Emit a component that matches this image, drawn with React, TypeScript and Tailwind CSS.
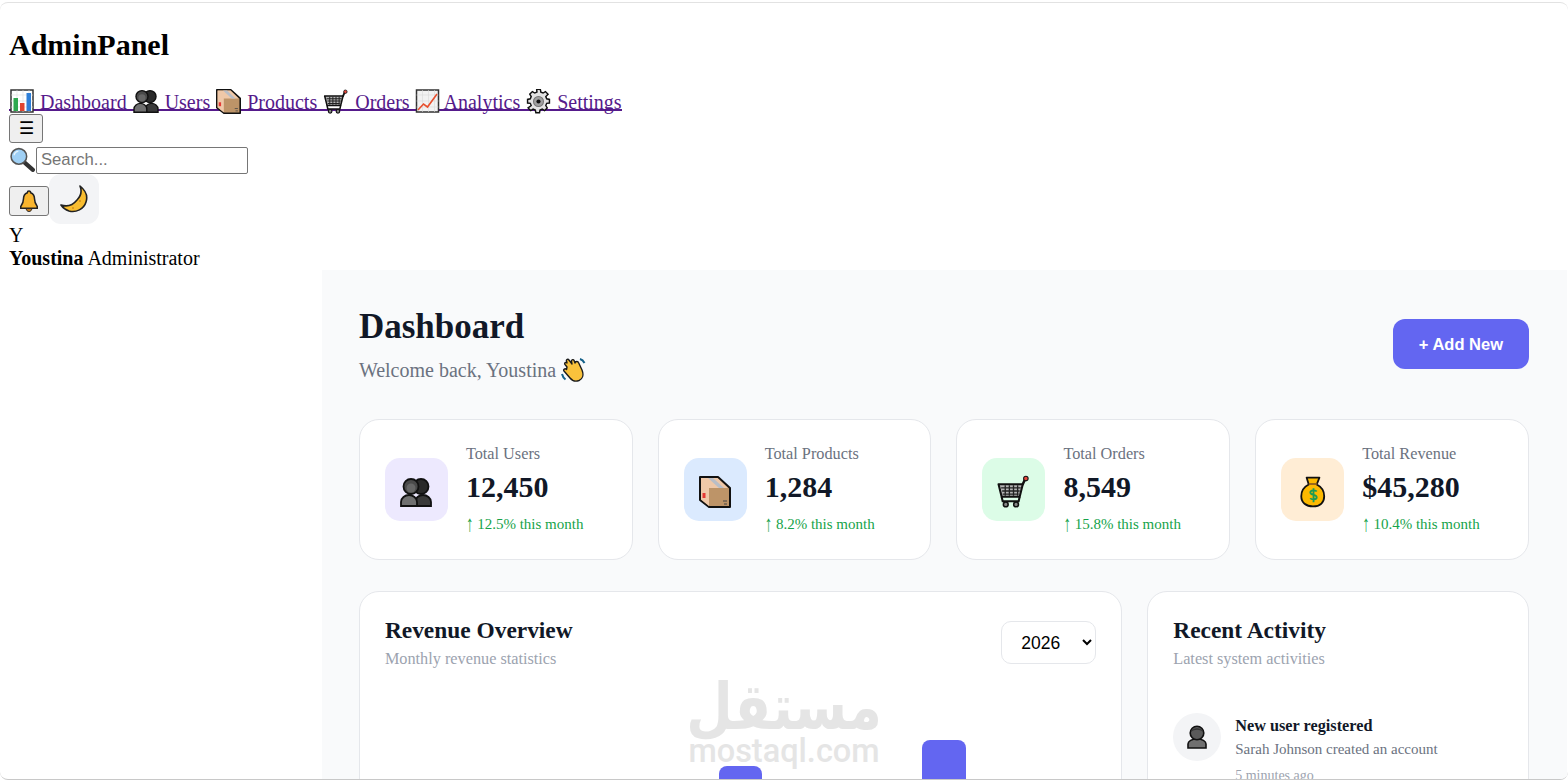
type IconProps = { w?: number; h?: number };

function BarChartEmoji({ w = 26, h = 24 }: IconProps) {
  return (
    <svg width={w} height={h} viewBox="0 0 24 24" className="inline-block align-[-4px]">
      <rect x="1" y="1" width="22" height="22" fill="#fff" stroke="#333" strokeWidth="1.500" />
      <path d="M1 6h22M1 12h22M1 18h22M7 1v22M13 1v22M19 1v22" stroke="#dcdcdc" strokeWidth="0.600" />
      <rect x="3.500" y="9" width="4.500" height="13" fill="#2ea84f" />
      <rect x="10" y="14" width="4.500" height="8" fill="#e0432f" />
      <rect x="16.500" y="4" width="4.500" height="18" fill="#2f7fd8" />
    </svg>
  );
}

function PeopleEmoji({ w = 28, h = 24 }: IconProps) {
  return (
    <svg width={w} height={h} viewBox="0 0 32 30" className="inline-block align-[-4px]">
      <path d="M15 29v-4c0-4 4-7 8-7s8 3 8 7v4z" fill="#3a3a3a" stroke="#111" strokeWidth="1.800" />
      <circle cx="21" cy="9.500" r="7.500" fill="#2a2a2a" stroke="#111" strokeWidth="1.800" />
      <path d="M1 29v-4c0-4 4-7 8-7s8 3 8 7v4z" fill="#707070" stroke="#111" strokeWidth="1.800" />
      <circle cx="11" cy="9.500" r="7.500" fill="#4a4a4a" stroke="#111" strokeWidth="1.800" />
      <ellipse cx="11" cy="11" rx="4.500" ry="4.500" fill="#666" />
    </svg>
  );
}

function PersonEmoji() {
  return (
    <svg width="24" height="24" viewBox="0 0 24 24">
      <path d="M3 23v-4c0-3 4-5 9-5s9 2 9 5v4z" fill="#707070" stroke="#111" strokeWidth="1.600" />
      <circle cx="12" cy="8" r="6.800" fill="#5a5a5a" stroke="#111" strokeWidth="1.600" />
      <path d="M6 7c3-3 9-3 12 0-1-5-11-5-12 0z" fill="#333" />
    </svg>
  );
}

function BoxEmoji({ w = 27, h = 25 }: IconProps) {
  return (
    <svg width={w} height={h} viewBox="0 0 32 32" className="inline-block align-[-5px]">
      <path d="M1 1h18l12 11v19H10l-9-7z" fill="#bd9468" stroke="#111" strokeWidth="2" strokeLinejoin="round" />
      <path d="M2 2h16.500L29 12H10v18l-8-6.500z" fill="#efc8a8" />
      <path d="M9 2h5l11 10h-5z" fill="#b9bec6" />
      <rect x="3.500" y="17" width="3" height="5" fill="#e53935" />
      <path d="M24 25h4M25 28h3" stroke="#444" strokeWidth="1" />
    </svg>
  );
}

function CartEmoji({ w = 28, h = 25 }: IconProps) {
  return (
    <svg width={w} height={h} viewBox="0 0 32 32" className="inline-block align-[-5px]">
      <path d="M1.500 9H25l-3 12H4.500z" fill="#b5b5b5" stroke="#111" strokeWidth="2" strokeLinejoin="round" />
      <path d="M4 12.500h19M5 15.500h17M5.500 18.500h15.500M8 10v10M12 10v10M16 10v10M20 10v10" stroke="#222" strokeWidth="1.300" />
      <path d="M25 9l2.500-5.500" stroke="#111" strokeWidth="2.400" strokeLinecap="round" />
      <circle cx="28" cy="3.500" r="2.200" fill="#e5483c" stroke="#111" strokeWidth="1" />
      <path d="M4.500 21l1 4.500h15.500l1-4.500" fill="none" stroke="#111" strokeWidth="2" />
      <circle cx="8.500" cy="28.500" r="2.300" fill="#888" stroke="#111" strokeWidth="1.500" />
      <circle cx="18.500" cy="28.500" r="2.300" fill="#888" stroke="#111" strokeWidth="1.500" />
    </svg>
  );
}

function TrendEmoji({ w = 25, h = 24 }: IconProps) {
  return (
    <svg width={w} height={h} viewBox="0 0 24 24" className="inline-block align-[-4px]">
      <rect x="1" y="1" width="22" height="22" fill="#f2f2f2" stroke="#333" strokeWidth="1.500" />
      <path d="M1 6h22M1 12h22M1 18h22M7 1v22M13 1v22M19 1v22" stroke="#d8d8d8" strokeWidth="0.600" />
      <path d="M2.500 21 8 15l4 3 9.500-13" fill="none" stroke="#e8502f" strokeWidth="1.600" />
    </svg>
  );
}

function GearEmoji({ w = 27, h = 25 }: IconProps) {
  return (
    <svg width={w} height={h} viewBox="0 0 24 24" className="inline-block align-[-5px]">
      <path
        d="M10 1h4l.6 3 2.400 1 2.600-1.600 2.900 2.900L20 8.900l1 2.400 3 .7v4l-3 .3-1 2.400 1.600 2.600-2.900 2.900-2.600-1.600-2.400 1-.6 3h-4l-.6-3-2.400-1-2.600 1.600-2.900-2.900L4 18.700 3 16.300 0 16v-4l3-.7 1-2.400-1.600-2.600 2.900-2.900L7.900 5l2.400-1z"
        transform="translate(1.500 -.5) scale(.875)"
        fill="#e4e4e4"
        stroke="#111"
        strokeWidth="1.600"
      />
      <circle cx="12" cy="12" r="4.800" fill="#a0a0a0" stroke="#777" />
      <circle cx="12" cy="12" r="2" fill="#111" />
    </svg>
  );
}

function SearchEmoji() {
  return (
    <svg width="27" height="25" viewBox="0 0 26 24" className="mb-[2px] inline-block">
      <path d="M14 14 23 22" stroke="#333" strokeWidth="4" strokeLinecap="round" />
      <circle cx="9.500" cy="9" r="7.500" fill="#9fd0f5" stroke="#555" strokeWidth="1.500" />
      <path d="M5 8c0-2 2-4 4-4" stroke="#e4f3fd" strokeWidth="1.500" fill="none" />
    </svg>
  );
}

function BellEmoji() {
  return (
    <svg width="20" height="22" viewBox="0 0 18 20" className="inline-block">
      <path d="M9 1c-1 0-1.500.7-1.500 1.500C5 3.500 4 5.500 4 8c0 3-1 5-2.500 7v1.500h15V15C15 13 14 11 14 8c0-2.500-1-4.500-3.500-5.500C10.500 1.700 10 1 9 1z" fill="#f9b52e" stroke="#222" strokeWidth="1.400" />
      <path d="M6.500 17c0 1.500 1 2.500 2.500 2.500s2.500-1 2.500-2.500z" fill="#e08b1a" stroke="#222" strokeWidth="0.900" />
    </svg>
  );
}

function MoonEmoji() {
  return (
    <svg width="30" height="30" viewBox="0 0 30 30">
      <path d="M21 2c5 4 8 10 6 16-2 7-10 11-17 9-3-1-6-3-8-6 6 2 12 0 16-5 4-4 5-9 3-14z" fill="#f9bd2f" stroke="#222" strokeWidth="1.600" strokeLinejoin="round" />
      <circle cx="21" cy="17" r="1.100" fill="#d8931c" />
      <circle cx="14" cy="24" r="1.100" fill="#d8931c" />
    </svg>
  );
}

function WaveEmoji() {
  return (
    <svg width="25" height="24" viewBox="0 0 25 24" className="inline-block align-[-5px]">
      <path d="M6 9 4 6.500c-1-1.500 1-3 2-1.500L5.500 3c-.5-1.500 1.500-2.500 2.500-1l3 4-.5-3c0-1.500 2-2 2.600-.5L14 5c.5-2 3-2 3.500-.5L21 12c2 5 .5 9-3 10.500-4 1.500-7 0-9-2.500L3 13c-1-1.500 1-3 2.500-1.500z" fill="#f9c23c" stroke="#1b1b1b" strokeWidth="1.400" strokeLinejoin="round" />
      <path d="M1 16c.5 2 1.500 4 3.500 5.500M19 1c2 .5 3.500 2 4.500 4" fill="none" stroke="#14618a" strokeWidth="2" />
    </svg>
  );
}

function MoneyEmoji() {
  return (
    <svg width="26" height="32" viewBox="0 0 24 30">
      <path d="M6 1.500h12l-2.500 6.500c4 2 7 6 7 11 0 6-4 9.500-10.500 9.500S1 25 1 19c0-5 3-9 7-11z" fill="#fdb900" stroke="#111" strokeWidth="1.700" strokeLinejoin="round" />
      <path d="M8 7.500h8" stroke="#8a5a20" strokeWidth="1.600" />
      <path d="M15.500 14.500c-1-1.500-6-1.500-6 1 0 3 6 1.500 6 4.500 0 2.500-5 2.500-6 .7M12.500 11.500v13" fill="none" stroke="#1d9a55" strokeWidth="1.700" />
    </svg>
  );
}

const navItems = [
  { icon: <BarChartEmoji />, label: "Dashboard" },
  { icon: <PeopleEmoji />, label: "Users" },
  { icon: <BoxEmoji />, label: "Products" },
  { icon: <CartEmoji />, label: "Orders" },
  { icon: <TrendEmoji />, label: "Analytics" },
  { icon: <GearEmoji />, label: "Settings" },
];

const stats = [
  { icon: <PeopleEmoji w={32} h={30} />, tint: "bg-[#ede9fe]", label: "Total Users", value: "12,450", trend: "12.5%" },
  { icon: <BoxEmoji w={32} h={32} />, tint: "bg-[#dbeafe]", label: "Total Products", value: "1,284", trend: "8.2%" },
  { icon: <CartEmoji w={33} h={33} />, tint: "bg-[#dcfce7]", label: "Total Orders", value: "8,549", trend: "15.8%" },
  { icon: <MoneyEmoji />, tint: "bg-[#ffedd5]", label: "Total Revenue", value: "$45,280", trend: "10.4%" },
];

export default function App() {
  return (
    <div className="relative h-[783px] overflow-hidden bg-white pt-[2px] font-['Liberation_Serif',serif] text-[20px] text-black">
      <div className="h-[778px] overflow-hidden rounded-lg border-t border-b border-t-[#e2e2e2] border-b-[#c8c8c8] bg-white">
        <aside className="pl-[9px]">
          <h1 className="mt-[25px] mb-[27px] text-[30px] leading-[34px] font-bold">AdminPanel</h1>
          <nav className="h-[23px] leading-[23px] whitespace-nowrap">
            <span className="bg-[linear-gradient(#551a8b,#551a8b)] bg-[length:100%_2px] bg-[position:0_18px] bg-no-repeat text-[#551a8b]">
              {navItems.map((item, i) => (
                <a key={item.label} href="#" className="no-underline">
                  {item.icon} {item.label}
                  {i < navItems.length - 1 ? " " : ""}
                </a>
              ))}
            </span>
          </nav>
          <button className="mt-[2px] flex h-[29px] w-[34px] items-center justify-center rounded-[3px] border border-[#767676] bg-[#efefef] font-['Liberation_Sans',sans-serif] text-[17px]">
            ☰
          </button>
          <div className="mt-[4px] flex h-[27px] items-center">
            <SearchEmoji />
            <input
              placeholder="Search..."
              className="h-[27px] w-[212px] rounded-[2px] border border-[#767676] px-[4px] pb-[2px] font-['Liberation_Sans',sans-serif] text-[16.67px] placeholder:text-[#757575]"
            />
          </div>
          <div className="flex items-center">
            <button className="mt-[4px] flex h-[30px] w-[40px] items-center justify-center rounded-[3px] border border-[#767676] bg-[#efefef]">
              <BellEmoji />
            </button>
            <button className="flex h-[50px] w-[50px] items-center justify-center rounded-xl bg-[#f3f4f6]">
              <MoonEmoji />
            </button>
          </div>
          <div className="leading-[23px]">Y</div>
          <div className="leading-[23px]">
            <strong>Youstina</strong> Administrator
          </div>
        </aside>
        <main className="mr-[1px] ml-[322px] h-[600px] bg-[#f9fafb] pt-[37px] pr-[38.1px] pl-[36.9px]">
          <div className="flex items-start justify-between">
            <div>
              <h2 className="text-[35px] leading-[40px] font-bold text-[#111827]">Dashboard</h2>
              <p className="mt-[11px] leading-[23px] text-[#6b7280]">
                Welcome back, Youstina <WaveEmoji />
              </p>
            </div>
            <button className="mt-[12px] h-[50px] w-[136px] rounded-xl bg-[#6366f1] font-['Liberation_Sans',sans-serif] text-[16.5px] font-bold text-white">
              + Add New
            </button>
          </div>
          <div className="mt-[37px] grid grid-cols-4 gap-[25px]">
            {stats.map((s) => (
              <div key={s.label} className="flex h-[141px] items-center gap-[18px] rounded-[20px] border border-[#e5e7eb] bg-white px-[25px]">
                <div className={`flex h-[63px] w-[63px] shrink-0 items-center justify-center rounded-[15px] pt-[4px] ${s.tint}`}>{s.icon}</div>
                <div className="mb-[2px]">
                  <div className="text-[16.25px] leading-[18px] text-[#6b7280]">{s.label}</div>
                  <div className="mt-[7px] text-[30px] leading-[34px] font-bold text-[#111827]">{s.value}</div>
                  <div className="mt-[12px] text-[15px] leading-[17px] text-[#16a34a]">
                    <span className="inline-block scale-y-[1.5]">↑</span> {s.trend} this month
                  </div>
                </div>
              </div>
            ))}
          </div>
          <div className="mt-[31px] grid grid-cols-[2fr_1fr] gap-[25px]">
            <div className="relative h-[300px] rounded-[20px] border border-[#e5e7eb] bg-white px-[25px] pt-[25px]">
              <div className="flex items-start justify-between">
                <div>
                  <h3 className="text-[23.4px] leading-[26px] font-bold text-[#111827]">Revenue Overview</h3>
                  <p className="mt-[7px] text-[16.25px] leading-[18px] text-[#9ca3af]">Monthly revenue statistics</p>
                </div>
                <select className="mt-[4px] h-[43px] w-[95px] rounded-[10px] border border-[#e5e7eb] bg-white px-[15px] font-['Liberation_Sans',sans-serif] text-[17.5px]">
                  <option>2026</option>
                </select>
              </div>
              <div className="absolute top-[174px] left-[359px] h-[40px] w-[43px] rounded-t-lg bg-[#6366f1]" />
              <div className="absolute top-[148px] left-[562px] h-[60px] w-[44px] rounded-t-lg bg-[#6366f1]" />
            </div>
            <div className="h-[300px] rounded-[20px] border border-[#e5e7eb] bg-white px-[25px] pt-[25px]">
              <h3 className="text-[23.4px] leading-[26px] font-bold text-[#111827]">Recent Activity</h3>
              <p className="mt-[7px] text-[16.25px] leading-[18px] text-[#9ca3af]">Latest system activities</p>
              <div className="mt-[45px] flex gap-[14px]">
                <div className="flex h-[48px] w-[48px] shrink-0 items-center justify-center rounded-full bg-[#f3f4f6]">
                  <PersonEmoji />
                </div>
                <div className="pt-[4px]">
                  <div className="text-[16.25px] leading-[18px] font-bold text-[#111827]">New user registered</div>
                  <div className="mt-[6px] text-[15px] leading-[17px] text-[#6b7280]">Sarah Johnson created an account</div>
                  <div className="mt-[10px] text-[14px] leading-[16px] text-[#9ca3af]">5 minutes ago</div>
                </div>
              </div>
            </div>
          </div>
        </main>
      </div>
      <div className="pointer-events-none absolute top-[675px] left-[689px] flex w-[190px] flex-col items-center text-[#d4d4d4] opacity-60">
        <div className="scale-y-[1.2] font-['DejaVu_Sans',sans-serif] text-[53.5px] leading-[63px] font-bold" dir="rtl">
          مستقل
        </div>
        <div className="font-['Roboto',sans-serif] text-[32.5px] leading-[26px] font-medium">mostaql.com</div>
      </div>
    </div>
  );
}
